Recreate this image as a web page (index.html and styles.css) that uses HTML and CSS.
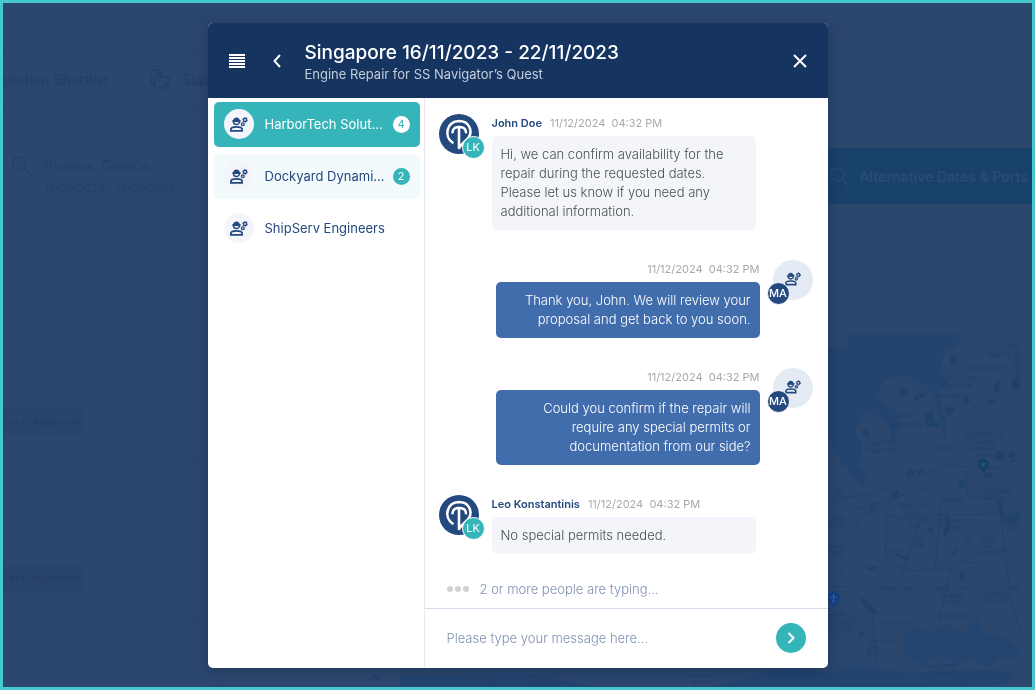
FILE: index.html
```
<!DOCTYPE html>
<html lang="en">
<head>
    <meta charset="UTF-8">
    <meta name="viewport" content="width=device-width, initial-scale=1.0">
    <title>Port call messages</title>
    <link rel="stylesheet" href="styles.css">
</head>
<body>
    <!-- shared icons -->
    <svg class="sprite" aria-hidden="true">
        <symbol id="engineer" viewBox="0 0 18 15">
            <path d="M3.4 4.2a3.1 3.3 0 0 0 6.2 0z" fill="none" stroke="currentColor" stroke-width="1.5"/>
            <path d="M2.4 4.8V3.2h.9C3.5 1.400 4.700.400 6.500.400s3 1 3.200 2.800h.9v1.600z" fill="currentColor"/>
            <path d="M.9 13.800v-1.500c0-1.700 3-2.500 5.600-2.500s5.600.8 5.600 2.500v1.500z" fill="none" stroke="currentColor" stroke-width="1.800"/>
            <circle cx="15" cy="2.900" r="1.600" fill="none" stroke="currentColor" stroke-width="1.400"/>
            <circle cx="15" cy="2.900" r="2.500" fill="none" stroke="currentColor" stroke-width=".8" stroke-dasharray="1.300 1.300"/>
            <circle cx="12.800" cy="7.300" r="1.400" fill="none" stroke="currentColor" stroke-width="1.300"/>
        </symbol>
        <symbol id="logo" viewBox="0 0 40 40">
            <circle cx="20" cy="20" r="20" fill="#24497f"/>
            <g fill="none" stroke="#fff" stroke-width="2.600" stroke-linecap="round" stroke-linejoin="round">
                <path d="M13.500 28.500C5 23 7 7.500 20 7c10.500 0 13.500 10 10 16-2 3.500-7 6-10 11V13"/>
                <path d="M13.500 18.200c0-3.700 3-5.200 6.500-5.200s7 1.500 7 5.200"/>
            </g>
        </symbol>
        <symbol id="search" viewBox="0 0 18 18">
            <g fill="none" stroke="currentColor" stroke-width="1.300" stroke-linecap="round">
                <circle cx="7.500" cy="7.500" r="6.600"/>
                <path d="M12.300 12.300l5 5"/>
            </g>
        </symbol>
    </svg>

    <div class="page">
        <div class="topbar"></div>
        <nav class="tabs">
            <span class="tab">otation Shortlist</span>
            <span class="tab">
                <svg width="20" height="20" viewBox="0 0 20 20" fill="none" stroke="currentColor" stroke-width="1.300" stroke-linejoin="round">
                    <path d="M4.500 15H3a2 2 0 0 1-2-2V3a2 2 0 0 1 2-2h5l4 4.500H8V1"/>
                    <path d="M6.500 8h11a2 2 0 0 1 2 2v5l-4 4h-9a2 2 0 0 1-2-2v-7a2 2 0 0 1 2-2zM15.500 19v-4h4"/>
                </svg>
                Suppliers
            </span>
        </nav>
        <div class="search-row">
            <div class="port">
                <svg class="search-icon"><use href="#search"/></svg>
                <div>
                    <div class="port-name">Piraeus, Greece</div>
                    <div class="port-dates">16/06/2023 - 19/06/2023</div>
                </div>
            </div>
            <button class="alt-button" type="button">
                <svg class="search-icon"><use href="#search"/></svg>
                Alternative Dates &amp; Ports
            </button>
        </div>
        <div class="content">
            <div class="quotes">
                <div class="quote"><span class="tag">kers' Approval</span></div>
                <div class="quote"><span class="tag">kers' Approval</span></div>
                <div class="quote-toggle">
                    <svg width="10" height="6" viewBox="0 0 10 6" fill="none" stroke="currentColor" stroke-width="1.500">
                        <path d="M1 5l4-4 4 4"/>
                    </svg>
                </div>
            </div>
            <svg class="map" viewBox="-1275 42 1860 1059" preserveAspectRatio="xMaxYMin slice">
                <rect x="-1275" y="42" width="1860" height="1059" fill="#2b476e"/>
                <g fill="#22446f">
                    <path d="M75 42H420L395 75 355 100 345 160 375 190 340 215 350 260 365 300 360 360 345 300 320 215 300 195 240 165 180 180 155 225 190 255 220 280 225 320 205 370 185 300 120 270 90 330 115 380 100 430 130 470 110 500 60 440 25 390 0 300V90L60 80z"/>
                    <path d="M585 180L560 120 585 90z"/>
                    <path d="M-1275 1070L-900 1060-700 1101H-1275zM-330 1101L-120 1040 0 1060 110 1035 250 1060 480 1050 585 1060 530 1095 250 1101z"/>
                    <path d="M235 950l40-35 45 25 45-30 50 35 45-55 20 60 40-10 65 50v30l-60-10-35 35-50-35-45 25-50-30-60 30-50-40z" opacity=".7"/>
                    <path d="M0 820l60 5 70 55-15 40-50 55-65-10z" opacity=".35"/>
                </g>
                <g fill="#1f4269">
                    <path d="M218 210l20-5 12 10-14 12-16-4zM265 232l32-15 5 10-30 16zM375 110l14-8 8 18-12 14-10-8zM412 238l14-10 10 14-12 12zM362 265l14-6 14 10-12 16-14-6zM300 278l24-2 4 28 16 4-4 14-38-2zM560 180l24-10v40l-22 0zM510 190l16-8-6 34-12 0zM488 244l20-10 2 12-18 8zM108 335l16-6 14 14-16 10zM244 460l12-12 16 6-12 18-16-4zM275 452l22-6 2 10-20 6zM400 484l16-8 4 22-14 8zM505 405l18-14 20 16-18 16-18-6zM552 398l20-4-6 22-16-4zM476 462l22-4 4 14-24 2zM513 545l14-4 14 50 40-14 4 24-48 12zM196 518l26-8-4 24-20 2zM132 560l16-16 14 6-18 18zM212 700l42 14-6 8-38-14zM384 690l14-6-8 26-8-4zM405 755l14-6-6 36-8-4zM126 742l30-4v10l-28 2zM100 830l22 12 30 24 8 16-26 0zM98 942l10-12 12 14-14 8zM360 590l10-6 6 40-14 30-8-6 8-30zM306 626l14-6 8 14-14 8z"/>
                </g>
                <g fill="none" stroke="#25416a" stroke-width="3">
                    <path d="M0 470l80 90 105 20-5 140 80 32 120-8 30-18 60 4 110 0"/>
                    <path d="M20 540l120-20 160-60 60-25 60 5 90 5 60-25 75-15"/>
                    <path d="M420 440l10 90 90 10 20 160 20 150 30 100M40 520l90 140-90 110M0 800l80 0 60 60 15 175"/>
                    <path d="M60 620l180-100 100-20M190 590l380-10M230 760l60-180M330 745l20-220M540 700l45-60M380 740l-40 170"/>
                </g>
                <g class="map-label">
                    <text x="566" y="88">Sag</text>
                    <text x="532" y="110">National H</text>
                    <text x="487" y="149">Locust Valley</text>
                    <text x="398" y="183">Γκλεν Κοουβ</text>
                    <text x="398" y="205">Glen Cove</text>
                    <text x="371" y="234">Sea Cliff</text>
                    <text x="244" y="298">Port</text>
                    <text x="244" y="320">Washington</text>
                    <text x="171" y="376">Γκρέιτ Νεκ</text>
                    <text x="171" y="398">Great Neck</text>
                    <text x="357" y="389">Roslyn</text>
                    <text x="475" y="350">Old Westbury</text>
                    <text x="475" y="372">Gardens</text>
                    <text x="475" y="393">Βοτανικός</text>
                    <text x="475" y="413">κήπος</text>
                    <text x="508" y="520">Γουέστμπερι</text>
                    <text x="508" y="541">Westbury</text>
                    <text x="382" y="549">Mineola</text>
                    <text x="269" y="564">Νιου Χάιντ</text>
                    <text x="269" y="585">Παρκ</text>
                    <text x="269" y="606">New Hyde</text>
                    <text x="269" y="627">Park</text>
                    <text x="396" y="609">Γκάρντεν Σίτι</text>
                    <text x="396" y="630">Garden City</text>
                    <text x="30" y="605">ΚΟΥΙΝΣ</text>
                    <text x="26" y="626">QUEENS</text>
                    <text x="210" y="699">Elmont</text>
                    <text x="494" y="701">Uniondale</text>
                    <text x="221" y="814">Valley Stream</text>
                    <text x="380" y="812">Ροκβιλ Σέντερ</text>
                    <text x="380" y="833">Rockville</text>
                    <text x="380" y="854">Centre</text>
                    <text x="514" y="827">Φρίπορτ</text>
                    <text x="514" y="848">Freeport</text>
                    <text x="568" y="814">Me</text>
                    <text x="383" y="894">Oceanside</text>
                    <text x="210" y="916">Woodmere</text>
                    <text x="34" y="888">Διεθνές</text>
                    <text x="34" y="910">Αεροδρόμιο</text>
                    <text x="34" y="933">Τζ. Κένεντι</text>
                    <text x="169" y="968">Lawrence</text>
                    <text x="341" y="1044">Λονγκ Μπιτς</text>
                    <text x="341" y="1065">Long Beach</text>
                    <text x="-1020" y="1088">Carteret</text>
                </g>
                <g class="map-label small">
                    <text x="22" y="684">ΤΖΑΜΑΙΚΑ</text>
                    <text x="26" y="702">JAMAICA</text>
                    <text x="-834" y="1073">ΣΤΑΤΕΝ ΑΪΛΑΝΤ</text>
                    <text x="-834" y="1092">STATEN ISLAND</text>
                    <text x="-378" y="1074">BRIGHTON</text>
                    <text x="-378" y="1093">BEACH</text>
                    <text x="561" y="628">14</text>
                    <text x="281" y="677">24</text>
                    <text x="429" y="673">24</text>
                    <text x="486" y="673">102</text>
                    <text x="145" y="999">878</text>
                </g>
                <g fill="none" stroke="#203d66" stroke-width="2">
                    <rect x="547" y="611" width="28" height="22" rx="11"/>
                    <rect x="267" y="659" width="28" height="24" rx="12"/>
                    <rect x="415" y="655" width="28" height="24" rx="12"/>
                    <rect x="468" y="655" width="36" height="24" rx="12"/>
                    <rect x="128" y="982" width="34" height="23" rx="11"/>
                </g>
                <path d="M475 464c-2-16-17-16-17-31a17 17 0 0 1 34 0c0 15-15 15-17 31z" fill="#164166"/>
                <path d="M475 426v14M468 429l14 8M482 429l-14 8" stroke="#2b5578" stroke-width="3"/>
                <path d="M26 864c-2-16-17-16-17-31a17 17 0 0 1 34 0c0 15-15 15-17 31z" fill="#123f8a"/>
                <path d="M26 822v22M15 835l11-6 11 6M21 844h10" fill="none" stroke="#3f66a3" stroke-width="3"/>
            </svg>
        </div>
    </div>

    <div class="overlay">
        <div class="modal" role="dialog" aria-labelledby="modal-title">
            <header class="modal-header">
                <button class="icon-button" type="button" aria-label="Menu">
                    <svg width="16" height="14" viewBox="0 0 16 14" stroke="#fff" stroke-width="2" shape-rendering="crispEdges">
                        <path d="M0 1h16M0 4h16M0 7h16M0 10h16M0 13h16"/>
                    </svg>
                </button>
                <button class="icon-button" type="button" aria-label="Back">
                    <svg width="8" height="14" viewBox="0 0 8 14" fill="none" stroke="#fff" stroke-width="2">
                        <path d="M7 1L1.500 7 7 13"/>
                    </svg>
                </button>
                <div class="heading">
                    <h1 id="modal-title">Singapore 16/11/2023 - 22/11/2023</h1>
                    <p>Engine Repair for SS Navigator’s Quest</p>
                </div>
                <button class="icon-button" type="button" aria-label="Close">
                    <svg width="14" height="14" viewBox="0 0 14 14" stroke="#fff" stroke-width="2">
                        <path d="M1 1l12 12M13 1L1 13"/>
                    </svg>
                </button>
            </header>

            <div class="modal-body">
                <div class="suppliers">
                    <button class="supplier active" type="button">
                        <span class="supplier-icon"><svg><use href="#engineer"/></svg></span>
                        <span class="supplier-name">HarborTech Solut...</span>
                        <span class="count">4</span>
                    </button>
                    <button class="supplier unread" type="button">
                        <span class="supplier-icon"><svg><use href="#engineer"/></svg></span>
                        <span class="supplier-name">Dockyard Dynami...</span>
                        <span class="count">2</span>
                    </button>
                    <button class="supplier" type="button">
                        <span class="supplier-icon"><svg><use href="#engineer"/></svg></span>
                        <span class="supplier-name">ShipServ Engineers</span>
                    </button>
                </div>

                <div class="chat">
                    <div class="messages">
                        <div class="message">
                            <div class="avatar">
                                <svg class="logo"><use href="#logo"/></svg>
                                <span class="initials">LK</span>
                            </div>
                            <div class="message-body">
                                <div class="meta"><strong>John Doe</strong><time>11/12/2024&nbsp; 04:32 PM</time></div>
                                <p class="bubble">Hi, we can confirm availability for the repair during the requested dates. Please let us know if you need any additional information.</p>
                            </div>
                        </div>
                        <div class="message own">
                            <div class="avatar">
                                <svg class="person"><use href="#engineer"/></svg>
                                <span class="initials">MA</span>
                            </div>
                            <div class="message-body">
                                <div class="meta"><time>11/12/2024&nbsp; 04:32 PM</time></div>
                                <p class="bubble">Thank you, John. We will review your proposal and get back to you soon.</p>
                            </div>
                        </div>
                        <div class="message own">
                            <div class="avatar">
                                <svg class="person"><use href="#engineer"/></svg>
                                <span class="initials">MA</span>
                            </div>
                            <div class="message-body">
                                <div class="meta"><time>11/12/2024&nbsp; 04:32 PM</time></div>
                                <p class="bubble">Could you confirm if the repair will require any special permits or documentation from our side?</p>
                            </div>
                        </div>
                        <div class="message">
                            <div class="avatar">
                                <svg class="logo"><use href="#logo"/></svg>
                                <span class="initials">LK</span>
                            </div>
                            <div class="message-body">
                                <div class="meta"><strong>Leo Konstantinis</strong><time>11/12/2024&nbsp; 04:32 PM</time></div>
                                <p class="bubble">No special permits needed.</p>
                            </div>
                        </div>
                    </div>
                    <div class="typing">
                        <span class="dots"><i></i><i></i><i></i></span>
                        2 or more people are typing...
                    </div>
                    <form class="composer">
                        <input type="text" aria-label="Message" placeholder="Please type your message here...">
                        <button class="send" type="button" aria-label="Send">
                            <svg width="8" height="12" viewBox="0 0 8 12" fill="none" stroke="#fff" stroke-width="2">
                                <path d="M1.500 1l5 5-5 5"/>
                            </svg>
                        </button>
                    </form>
                </div>
            </div>
        </div>
    </div>
</body>
</html>
```
FILE: styles.css
```
* {
    margin: 0;
    padding: 0;
    box-sizing: border-box;
}
body {
    font-family: Inter, 'Open Sans', sans-serif;
    font-size: 13px;
    color: #223f69;
}
button {
    font: inherit;
    color: inherit;
    background: none;
    border: none;
    cursor: pointer;
}
.sprite {
    display: none;
}

/* dimmed page behind the dialog */
.page {
    height: 100vh;
    overflow: hidden;
    display: flex;
    flex-direction: column;
    border: 3px solid #46c8d0;
    background: #2c476e;
}
.topbar {
    flex: none;
    height: 48px;
}
.tabs {
    display: flex;
    flex: none;
    gap: 41px;
    height: 56px;
    border-top: 1px solid #27426a;
    border-bottom: 1px solid #27426a;
    font-size: 14px;
    font-weight: 500;
}
.tab {
    display: flex;
    align-items: center;
    gap: 12px;
    white-space: nowrap;
}
.search-row {
    display: flex;
    flex: none;
    justify-content: space-between;
    align-items: center;
    margin-top: 19px;
    height: 100px;
    border-top: 1px solid #2a456c;
    border-bottom: 1px solid #2a456c;
}
.port {
    display: flex;
    gap: 14px;
    padding: 4px 0 0 9px;
}
.port-name {
    font-size: 14px;
    line-height: 20px;
}
.port-dates {
    font-size: 11px;
    line-height: 24px;
}
.search-icon {
    width: 18px;
    height: 18px;
    flex: none;
}
.alt-button {
    display: flex;
    justify-content: flex-end;
    align-items: center;
    gap: 11px;
    width: 25%;
    height: 56px;
    padding-right: 4px;
    background: #19426b;
    color: #2a4b75;
    font-size: 14px;
    font-weight: 600;
    white-space: nowrap;
}
.content {
    display: flex;
    flex: 1;
    min-height: 0;
    margin-top: 92px;
    padding: 16px 12px 0 0;
}
.quotes {
    flex: 1;
}
.quote {
    display: flex;
    align-items: flex-end;
    height: 157px;
    padding-bottom: 24px;
    border-bottom: 1px solid #28436b;
}
.quote:first-child {
    height: 127px;
}
.quote-toggle {
    display: flex;
    justify-content: flex-end;
    padding: 57px 20px 0 0;
}
.tag {
    padding-right: 5px;
    line-height: 30px;
    border-radius: 3px;
    background: #2a456c;
    font-size: 11px;
    font-weight: 500;
}
.map {
    width: 620px;
    height: 353px;
    flex: none;
}
.map-label {
    fill: #233f68;
    font-size: 18px;
    text-anchor: middle;
}
.map-label.small {
    font-size: 15px;
}

/* dialog */
.overlay {
    position: fixed;
    inset: 0;
    display: flex;
    justify-content: center;
    align-items: center;
}
.modal {
    width: 620px;
    max-width: 94%;
    overflow: hidden;
    border-radius: 5px;
    background: white;
    box-shadow: 0 2px 14px rgba(15, 35, 70, 0.5);
}
.modal-header {
    display: flex;
    align-items: center;
    padding: 17px 15px 16px 17px;
    background: #153460;
    color: white;
}
.icon-button {
    display: flex;
    justify-content: center;
    align-items: center;
    width: 25px;
    height: 25px;
}
.icon-button + .icon-button {
    margin-left: 15px;
}
.heading {
    flex: 1;
    margin-left: 15px;
}
.heading h1 {
    font-size: 19px;
    font-weight: 500;
    line-height: 26px;
}
.heading p {
    color: #c3cddb;
    font-size: 13px;
    line-height: 16px;
}
.modal-body {
    display: flex;
}
.suppliers {
    display: flex;
    flex-direction: column;
    gap: 7px;
    flex: 0 0 216px;
    padding: 4px 4px 4px 6px;
}
.supplier {
    display: flex;
    align-items: center;
    height: 45px;
    padding: 0 10px;
    border-radius: 5px;
    color: #24497f;
    font-size: 13px;
    text-align: left;
}
.supplier-icon {
    display: flex;
    justify-content: center;
    align-items: center;
    width: 30px;
    height: 30px;
    margin-right: 11px;
    border-radius: 50%;
    background: #f4f5fa;
    color: #24497f;
}
.supplier-icon svg {
    width: 18px;
    height: 15px;
}
.supplier-name {
    flex: 1;
    white-space: nowrap;
}
.supplier.unread {
    background: #f3fafb;
}
.supplier.active {
    background: #35b4b9;
    color: white;
}
.count {
    width: 17px;
    border-radius: 50%;
    background: #35b4b9;
    color: white;
    font-size: 11px;
    line-height: 17px;
    text-align: center;
}
.active .count {
    background: white;
    color: #35b4b9;
}

/* conversation */
.chat {
    display: flex;
    flex-direction: column;
    flex: 1;
    min-width: 0;
    border-left: 1px solid #e4e8f1;
}
.messages {
    display: flex;
    flex-direction: column;
    gap: 30px;
    padding: 16px 15px 0 14px;
}
.message {
    display: flex;
    gap: 13px;
}
.message.own {
    flex-direction: row-reverse;
}
.avatar {
    position: relative;
    flex: none;
    width: 40px;
    height: 40px;
    border-radius: 50%;
}
.logo {
    display: block;
    width: 40px;
    height: 40px;
}
.own .avatar {
    display: flex;
    justify-content: center;
    align-items: center;
    padding-bottom: 2px;
    background: #e4ebf4;
    color: #24497f;
}
.person {
    width: 16px;
    height: 14px;
}
.initials {
    position: absolute;
    top: 22px;
    right: -6px;
    width: 23px;
    border: 1px solid white;
    border-radius: 50%;
    background: #35b4b9;
    color: white;
    font-size: 11px;
    line-height: 21px;
    text-align: center;
}
.own .initials {
    right: auto;
    left: -6px;
    background: #24497f;
    font-weight: 500;
}
.message-body {
    flex: 0 1 264px;
}
.meta {
    display: flex;
    align-items: center;
    gap: 8px;
    height: 18px;
    margin-bottom: 4px;
    color: #a5a9ae;
    font-size: 11px;
}
.meta strong {
    color: #24497f;
    font-weight: 600;
}
.own .meta {
    justify-content: flex-end;
}
.bubble {
    padding: 9px;
    border-radius: 5px;
    background: #f4f5fa;
    color: #4a5056;
    font-weight: 300;
    line-height: 19px;
}
.own .bubble {
    background: #416dad;
    color: white;
    text-align: right;
}
.typing {
    display: flex;
    align-items: center;
    gap: 11px;
    padding: 25px 22px 9px;
    color: #7f92b0;
    line-height: 20px;
    font-weight: 300;
}
.dots {
    display: flex;
    gap: 2px;
}
.dots i {
    width: 6px;
    height: 6px;
    border-radius: 50%;
    background: #d0d2d4;
}
.composer {
    display: flex;
    align-items: center;
    height: 60px;
    padding: 0 22px;
    border-top: 1px solid #d3dcea;
}
.composer input {
    flex: 1;
    border: none;
    outline: none;
    background: none;
    font: inherit;
    font-weight: 300;
    color: #24497f;
}
.composer input::placeholder {
    color: #7f92b0;
}
.send {
    display: flex;
    justify-content: center;
    align-items: center;
    width: 30px;
    height: 30px;
    border-radius: 50%;
    background: #35b4b9;
}
```
